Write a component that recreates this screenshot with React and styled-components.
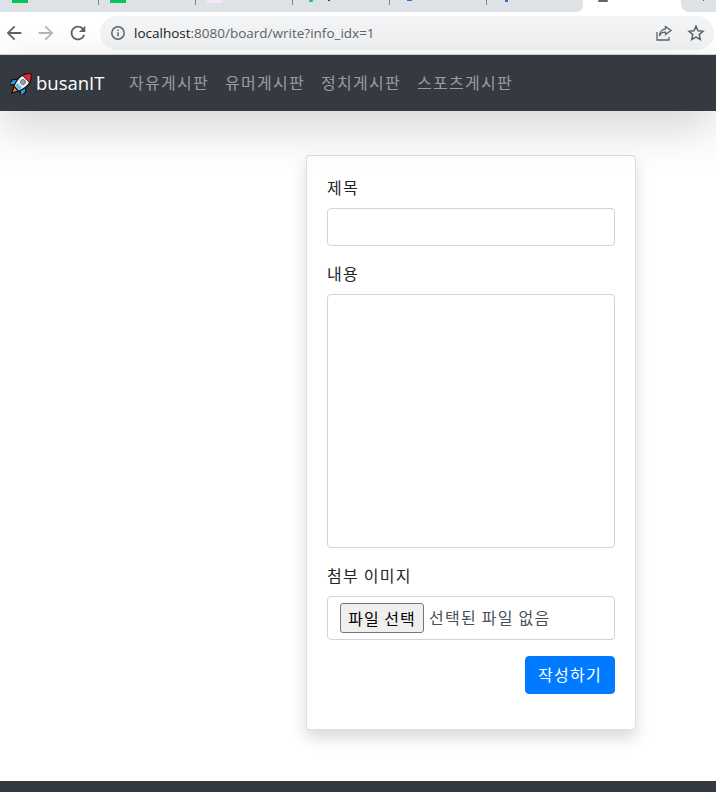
import React from 'react';
import styled, { createGlobalStyle } from 'styled-components';

const KR = `"Noto Sans CJK KR", "Noto Sans", sans-serif`;

const GlobalStyle = createGlobalStyle`
  html, body {
    margin: 0;
    padding: 0;
    background: #fff;
  }
  body {
    height: 792px;
    overflow: hidden;
    font-family: ${KR};
    font-size: 16px;
    line-height: 1.5;
    color: #212529;
  }
  * {
    box-sizing: border-box;
  }
`;

const Page = styled.div`
  height: 792px;
  overflow: hidden;
`;

// browser chrome
const TabStrip = styled.div`
  display: flex;
  height: 12px;
  background: #dee1e6;
  overflow: hidden;
`;

const Tab = styled.div`
  display: flex;
  align-items: flex-start;
  flex: 0 0 auto;
  width: ${(p) => p.$width}px;
  height: 12px;
  padding-left: ${(p) => p.$pad}px;
  background: ${(p) => (p.$active ? '#fff' : '#dee1e6')};
  position: relative;

  &::after {
    content: '';
    display: ${(p) => (p.$sep ? 'block' : 'none')};
    position: absolute;
    right: 0;
    top: 0;
    width: 1px;
    height: 5px;
    background: #7f8387;
  }
`;

const TabCorner = styled.div`
  flex: 0 0 auto;
  width: ${(p) => p.$width}px;
  height: 12px;
  background: #fff;
`;

const TabCornerInner = styled.div`
  height: 12px;
  background: #dee1e6;
  border-bottom-right-radius: ${(p) => (p.$right ? 8 : 0)}px;
  border-bottom-left-radius: ${(p) => (p.$right ? 0 : 8)}px;
`;

const Favicon = styled.span`
  display: block;
  width: ${(p) => p.$w}px;
  height: ${(p) => p.$h}px;
  margin-right: ${(p) => p.$gap || 0}px;
  background: ${(p) => p.$color};
  border-radius: ${(p) => p.$round || 0}px;
`;

const Toolbar = styled.div`
  display: flex;
  align-items: center;
  height: 43px;
  padding: 4px 2px 5px 3px;
  background: #fff;
  border-bottom: 1px solid #d5d7da;
`;

const NavIcon = styled.svg`
  flex: 0 0 auto;
  width: 22px;
  height: 22px;
  margin-right: 10px;
  fill: ${(p) => p.$color};
`;

const AddressBar = styled.div`
  flex: 1;
  display: flex;
  align-items: center;
  height: 34px;
  margin-left: 1px;
  padding: 0 9px 0 10px;
  border-radius: 17px;
  background: #f1f3f4;
`;

const InfoIcon = styled.svg`
  flex: 0 0 auto;
  width: 16px;
  height: 16px;
  margin-right: 8px;
  fill: none;
  stroke: #5f6368;
`;

const Url = styled.div`
  flex: 1;
  font-family: "Open Sans", "Noto Sans", sans-serif;
  font-size: 13.5px;
  line-height: 20px;
  color: #5f6368;
  white-space: nowrap;
`;

const UrlHost = styled.span`
  color: #202124;
`;

const BarIcon = styled.svg`
  flex: 0 0 auto;
  width: 18px;
  height: 18px;
  margin-left: 14px;
  fill: none;
  stroke: #5f6368;
  stroke-width: 1.3;
`;

// site navbar
const Navbar = styled.nav`
  position: relative;
  z-index: 2;
  display: flex;
  align-items: center;
  height: 56px;
  padding: 0 8px;
  background: #343a40;
  box-shadow: 0 1rem 3rem rgba(0, 0, 0, 0.175);
`;

const Brand = styled.a`
  display: flex;
  align-items: center;
  width: 97px;
  margin-right: 16px;
  font-family: "Open Sans", "Noto Sans", sans-serif;
  font-size: 18.5px;
  line-height: 30px;
  color: #fff;
`;

const Rocket = styled.svg`
  flex: 0 0 auto;
  width: 24px;
  height: 24px;
  margin: 0 2px;
`;

const NavLinks = styled.div`
  display: flex;
`;

const NavLink = styled.a`
  padding: 7px 8px 9px;
  font-size: 16px;
  letter-spacing: 1.28px;
  color: rgba(255, 255, 255, 0.5);
  white-space: nowrap;
`;

// form
const Main = styled.main`
  display: flex;
  justify-content: flex-end;
  padding: 44px 80px 0 0;
`;

const Card = styled.form`
  width: 330px;
  height: 575px;
  padding: 20px;
  background: #fff;
  border: 1px solid rgba(0, 0, 0, 0.125);
  border-radius: 4px;
  box-shadow: 0 0.5rem 1rem rgba(0, 0, 0, 0.15);
`;

const Field = styled.div`
  margin-bottom: 16px;
`;

const Label = styled.label`
  display: block;
  line-height: 22px;
  margin-bottom: 10px;
  letter-spacing: 1.28px;
`;

const TextInput = styled.input`
  display: block;
  width: 100%;
  height: 38px;
  border: 1px solid #ced4da;
  border-radius: 4px;
  background: #fff;
`;

const TextArea = styled.textarea`
  display: block;
  width: 100%;
  height: 254px;
  border: 1px solid #ced4da;
  border-radius: 4px;
  background: #fff;
  resize: none;
`;

const FileBox = styled.div`
  display: flex;
  align-items: center;
  height: 44px;
  padding: 0 12px;
  border: 1px solid #ced4da;
  border-radius: 4px;
  color: #495057;
`;

const FileButton = styled.button`
  flex: 0 0 auto;
  width: 84px;
  height: 30px;
  margin-right: 5px;
  padding: 0 0 1px;
  border: 1px solid #767676;
  border-radius: 3px;
  background: #efefef;
  font-family: ${KR};
  font-size: 16px;
  letter-spacing: 1px;
  line-height: 1;
  color: #000;
`;

const FileName = styled.span`
  padding-bottom: 2px;
  letter-spacing: 1.25px;
  white-space: nowrap;
`;

const Actions = styled.div`
  display: flex;
  justify-content: flex-end;
`;

const SubmitButton = styled.button`
  width: 90px;
  height: 38px;
  padding: 0 0 2px;
  border: 1px solid #007bff;
  border-radius: 4px;
  background: #007bff;
  font-family: ${KR};
  font-size: 16px;
  letter-spacing: 1.28px;
  color: #fff;
`;

const Footer = styled.footer`
  height: 60px;
  margin-top: 51px;
  background: #343a40;
`;

const RocketLogo = () => (
  <Rocket viewBox="1.5 1 21.5 21.5">
    <g transform="rotate(45 12 12)">
      <path d="M9 18.5 L15 18.5 L12 24.5 Z" fill="#f58220" stroke="#111" strokeWidth="1.1" />
      <path d="M7.6 11 L3.8 15.5 L4.2 20.5 L9 17.5 Z" fill="#2e9be0" stroke="#111" strokeWidth="1.1" />
      <path d="M16.4 11 L20.2 15.5 L19.8 20.5 L15 17.5 Z" fill="#2e9be0" stroke="#111" strokeWidth="1.1" />
      <path d="M12 0 C16.2 3.2 17.4 8 17 12 C16.8 14.8 15.8 17 15.2 18.8 L8.8 18.8 C8.2 17 7.2 14.8 7 12 C6.6 8 7.8 3.2 12 0 Z" fill="#e9edf0" stroke="#111" strokeWidth="1.1" />
      <path d="M12 0 C14.2 1.6 15.8 4 16.5 6.6 L7.5 6.6 C8.2 4 9.8 1.6 12 0 Z" fill="#e0272f" stroke="#111" strokeWidth="0.7" />
      <circle cx="12" cy="10.4" r="2.2" fill="#8fa5b2" stroke="#5d6b75" strokeWidth="0.8" />
      <path d="M9 14.5 L15 14.5 L14.6 18 L9.4 18 Z" fill="#6cc0ee" />
    </g>
  </Rocket>
);

const App = () => {
  return (
    <Page>
      <GlobalStyle />
      <TabStrip>
        <Tab $width={99} $pad={12} $sep>
          <Favicon $w={16} $h={3} $color="#03c75a" />
        </Tab>
        <Tab $width={97} $pad={11} $sep>
          <Favicon $w={16} $h={3} $color="#03c75a" />
        </Tab>
        <Tab $width={97} $pad={11} $sep>
          <Favicon $w={16} $h={3} $color="#f3e6f7" />
        </Tab>
        <Tab $width={97} $pad={16} $sep>
          <Favicon $w={4} $h={2} $gap={15} $round={1} $color="#1fc16b" />
          <Favicon $w={2} $h={1} $color="#3c4043" />
        </Tab>
        <Tab $width={97} $pad={17} $sep>
          <Favicon $w={5} $h={1} $color="#1a73e8" />
        </Tab>
        <Tab $width={89} $pad={18}>
          <Favicon $w={3} $h={2} $color="#1a73e8" />
        </Tab>
        <TabCorner $width={7}>
          <TabCornerInner $right />
        </TabCorner>
        <Tab $width={98} $pad={15} $active>
          <Favicon $w={10} $h={2} $round={1} $color="#5f6368" />
        </Tab>
        <TabCorner $width={8}>
          <TabCornerInner />
        </TabCorner>
        <Tab $width={27} $pad={14}>
          <Favicon $w={1} $h={1} $color="#5f6368" />
        </Tab>
      </TabStrip>

      <Toolbar>
        <NavIcon viewBox="0 0 24 24" $color="#5f6368">
          <path d="M20 11H7.83l5.59-5.59L12 4l-8 8 8 8 1.41-1.41L7.83 13H20v-2z" />
        </NavIcon>
        <NavIcon viewBox="0 0 24 24" $color="#b4b6b8">
          <path d="M12 4l-1.41 1.41L16.17 11H4v2h12.17l-5.58 5.59L12 20l8-8z" />
        </NavIcon>
        <NavIcon viewBox="0 0 24 24" $color="#5f6368">
          <path d="M17.65 6.35C16.2 4.9 14.21 4 12 4c-4.42 0-7.99 3.58-7.99 8s3.57 8 7.99 8c3.73 0 6.84-2.55 7.73-6h-2.08c-.82 2.33-3.04 4-5.65 4-3.31 0-6-2.69-6-6s2.69-6 6-6c1.66 0 3.14.69 4.22 1.78L13 11h7V4l-2.35 2.35z" />
        </NavIcon>
        <AddressBar>
          <InfoIcon viewBox="0 0 16 16">
            <circle cx="8" cy="8" r="6.2" strokeWidth="1.5" />
            <path d="M8 7.2v4M8 4.6v1.5" strokeWidth="1.5" />
          </InfoIcon>
          <Url>
            <UrlHost>localhost</UrlHost>:8080/board/write?info_idx=1
          </Url>
          <BarIcon viewBox="0 0 18 18">
            <path d="M2 8v8h12v-3" />
            <path d="M10.5 2.5l5.5 4-5.5 4V8.2C7.5 8 5.5 9.5 4.5 12c0-4 2.5-6.8 6-7z" />
          </BarIcon>
          <BarIcon viewBox="0 0 18 18">
            <path d="M9 2.2l2 4.6 5 .5-3.8 3.3 1.1 4.9L9 13l-4.3 2.5 1.1-4.9L2 7.3l5-.5z" strokeWidth="1.5" />
          </BarIcon>
        </AddressBar>
      </Toolbar>

      <Navbar>
        <Brand>
          <RocketLogo />
          busanIT
        </Brand>
        <NavLinks>
          <NavLink>자유게시판</NavLink>
          <NavLink>유머게시판</NavLink>
          <NavLink>정치게시판</NavLink>
          <NavLink>스포츠게시판</NavLink>
        </NavLinks>
      </Navbar>

      <Main>
        <Card onSubmit={(e) => e.preventDefault()}>
          <Field>
            <Label>제목</Label>
            <TextInput type="text" />
          </Field>
          <Field>
            <Label>내용</Label>
            <TextArea />
          </Field>
          <Field>
            <Label>첨부 이미지</Label>
            <FileBox>
              <FileButton type="button">파일 선택</FileButton>
              <FileName>선택된 파일 없음</FileName>
            </FileBox>
          </Field>
          <Actions>
            <SubmitButton type="submit">작성하기</SubmitButton>
          </Actions>
        </Card>
      </Main>

      <Footer />
    </Page>
  );
};

export default App;
